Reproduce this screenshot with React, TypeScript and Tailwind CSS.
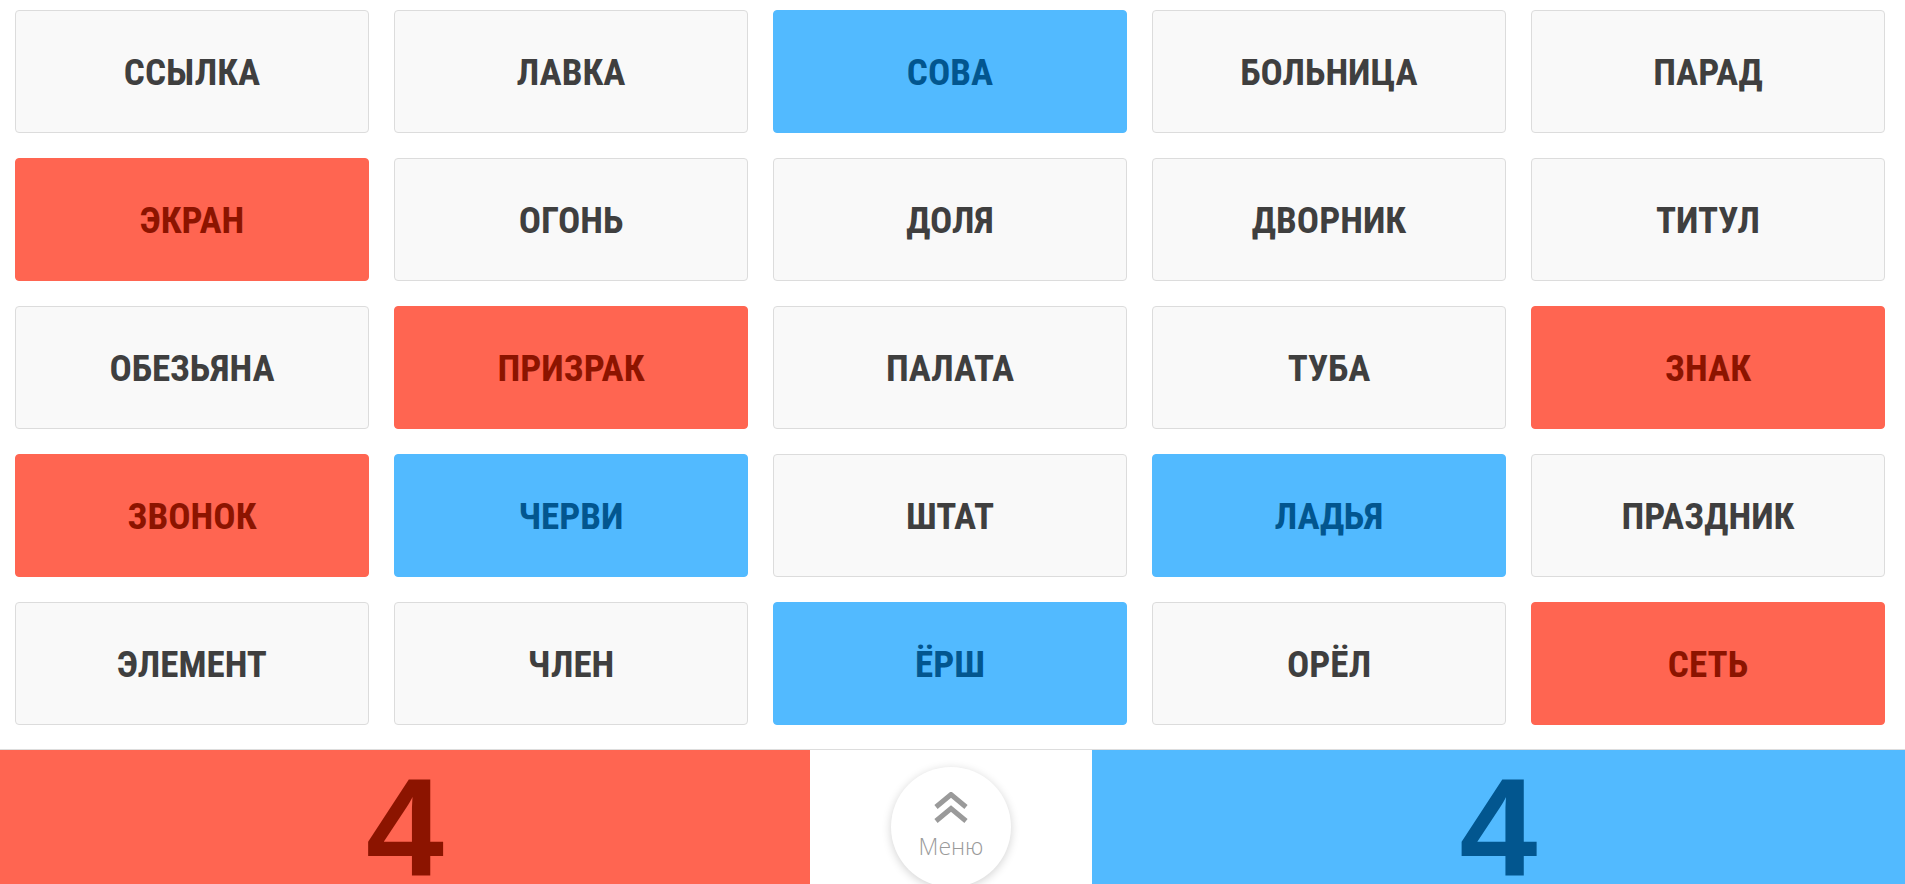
import React from "react";

type Team = "red" | "blue" | "none";

const words: { text: string; team: Team }[] = [
  { text: "ССЫЛКА", team: "none" },
  { text: "ЛАВКА", team: "none" },
  { text: "СОВА", team: "blue" },
  { text: "БОЛЬНИЦА", team: "none" },
  { text: "ПАРАД", team: "none" },
  { text: "ЭКРАН", team: "red" },
  { text: "ОГОНЬ", team: "none" },
  { text: "ДОЛЯ", team: "none" },
  { text: "ДВОРНИК", team: "none" },
  { text: "ТИТУЛ", team: "none" },
  { text: "ОБЕЗЬЯНА", team: "none" },
  { text: "ПРИЗРАК", team: "red" },
  { text: "ПАЛАТА", team: "none" },
  { text: "ТУБА", team: "none" },
  { text: "ЗНАК", team: "red" },
  { text: "ЗВОНОК", team: "red" },
  { text: "ЧЕРВИ", team: "blue" },
  { text: "ШТАТ", team: "none" },
  { text: "ЛАДЬЯ", team: "blue" },
  { text: "ПРАЗДНИК", team: "none" },
  { text: "ЭЛЕМЕНТ", team: "none" },
  { text: "ЧЛЕН", team: "none" },
  { text: "ЁРШ", team: "blue" },
  { text: "ОРЁЛ", team: "none" },
  { text: "СЕТЬ", team: "red" },
];

const cardStyles: Record<Team, string> = {
  none: "bg-[#f9f9f9] border border-[#dcdcdc] text-[#3f3f3f]",
  red: "bg-[#ff6551] border border-[#ff6551] text-[#8c1400]",
  blue: "bg-[#52baff] border border-[#52baff] text-[#02568f]",
};

function Card({ text, team }: { text: string; team: Team }) {
  return (
    <div className={`h-[123px] rounded-[4px] flex items-center justify-center pt-[2px] ${cardStyles[team]}`}>
      <span className="font-['Roboto',sans-serif] font-bold text-[37px] leading-none [font-stretch:condensed]">
        {text}
      </span>
    </div>
  );
}

function Chevrons() {
  return (
    <svg width="34" height="31" viewBox="0 0 34 31" fill="none" stroke="#9a9a9a" strokeWidth="5">
      <path d="M2 15 L17 2.5 L32 15" />
      <path d="M2 29 L17 16.5 L32 29" />
    </svg>
  );
}

export default function App() {
  return (
    <div className="w-full h-[884px] overflow-hidden bg-white">
      <div className="grid grid-cols-5 gap-x-[25px] gap-y-[25px] pl-[15px] pr-[20px] pt-[10px]">
        {words.map((w, i) => (
          <Card key={i} text={w.text} team={w.team} />
        ))}
      </div>

      <div className="mt-[24px] flex h-[135px] border-t border-[#dddddd]">
        <div className="w-[810px] bg-[#ff6551] flex justify-center pt-[8px]">
          <span className="font-['Liberation_Sans',Arial,sans-serif] font-bold text-[140px] leading-none text-[#8c1400]">4</span>
        </div>
        <div className="flex-1 bg-white flex justify-center pt-[17px]">
          <div className="w-[120px] h-[120px] rounded-full bg-white shadow-[0_2px_10px_rgba(0,0,0,0.18)] flex flex-col items-center pt-[25px]">
            <Chevrons />
            <span className="mt-[12px] font-['Open_Sans',sans-serif] font-light text-[23px] leading-none text-[#9a9a9a]">Меню</span>
          </div>
        </div>
        <div className="w-[813px] bg-[#52baff] flex justify-center pt-[8px]">
          <span className="font-['Liberation_Sans',Arial,sans-serif] font-bold text-[140px] leading-none text-[#02568f]">4</span>
        </div>
      </div>
    </div>
  );
}
